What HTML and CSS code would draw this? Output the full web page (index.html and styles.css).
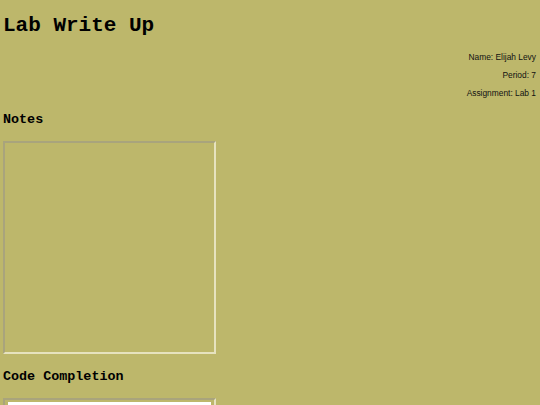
FILE: index.html
```html
<!DOCTYPE html>
<html>
<head>
<meta charset="utf-8">
<link rel="stylesheet" href="styles.css">
</head>
<body>
<div class="page">
  <h1 class="title">Lab Write Up</h1>
  <div class="info">
    <p class="info-line">Name: Elijah Levy</p>
    <p class="info-line">Period: 7</p>
    <p class="info-line">Assignment: Lab 1</p>
  </div>
  <h2 class="section">Notes</h2>
  <div class="frame notes"></div>
  <h2 class="section">Code Completion</h2>
  <div class="frame code"><div class="code-inner"></div></div>
</div>
</body>
</html>
```

FILE: styles.css
```css
html, body {
  margin: 0;
  padding: 0;
  background: #bdb76b;
  overflow: hidden;
  height: 405px;
}
.page {
  display: flex;
  flex-direction: column;
  align-items: flex-start;
  padding: 0 4px 0 3px;
  height: 405px;
  overflow: hidden;
}
.title {
  font-family: "Liberation Mono", monospace;
  font-weight: bold;
  font-size: 21px;
  line-height: 24px;
  margin: 14px 0 0 0;
  color: #000;
}
.info {
  align-self: stretch;
  display: flex;
  flex-direction: column;
  align-items: flex-end;
  margin-top: 10px;
}
.info-line {
  margin: 0;
  font-family: "Liberation Sans", Arial, sans-serif;
  font-size: 8.4px;
  line-height: 18px;
  color: #111;
}
.section {
  font-family: "Liberation Mono", monospace;
  font-weight: bold;
  font-size: 13.4px;
  line-height: 16px;
  margin: 10px 0 0 0;
  color: #000;
}
.section + .frame { margin-top: 13px; }
.frame + .section { margin-top: 15px; }
.frame {
  box-sizing: border-box;
  width: 213px;
  height: 213px;
  flex-shrink: 0;
  border-width: 2px;
  border-style: solid;
  border-color: #a9a47c #e6e2bf #e6e2bf #a9a47c;
}
.code {
  padding: 2px 3px;
}
.code-inner {
  background: #fff;
  height: 100%;
}
```
